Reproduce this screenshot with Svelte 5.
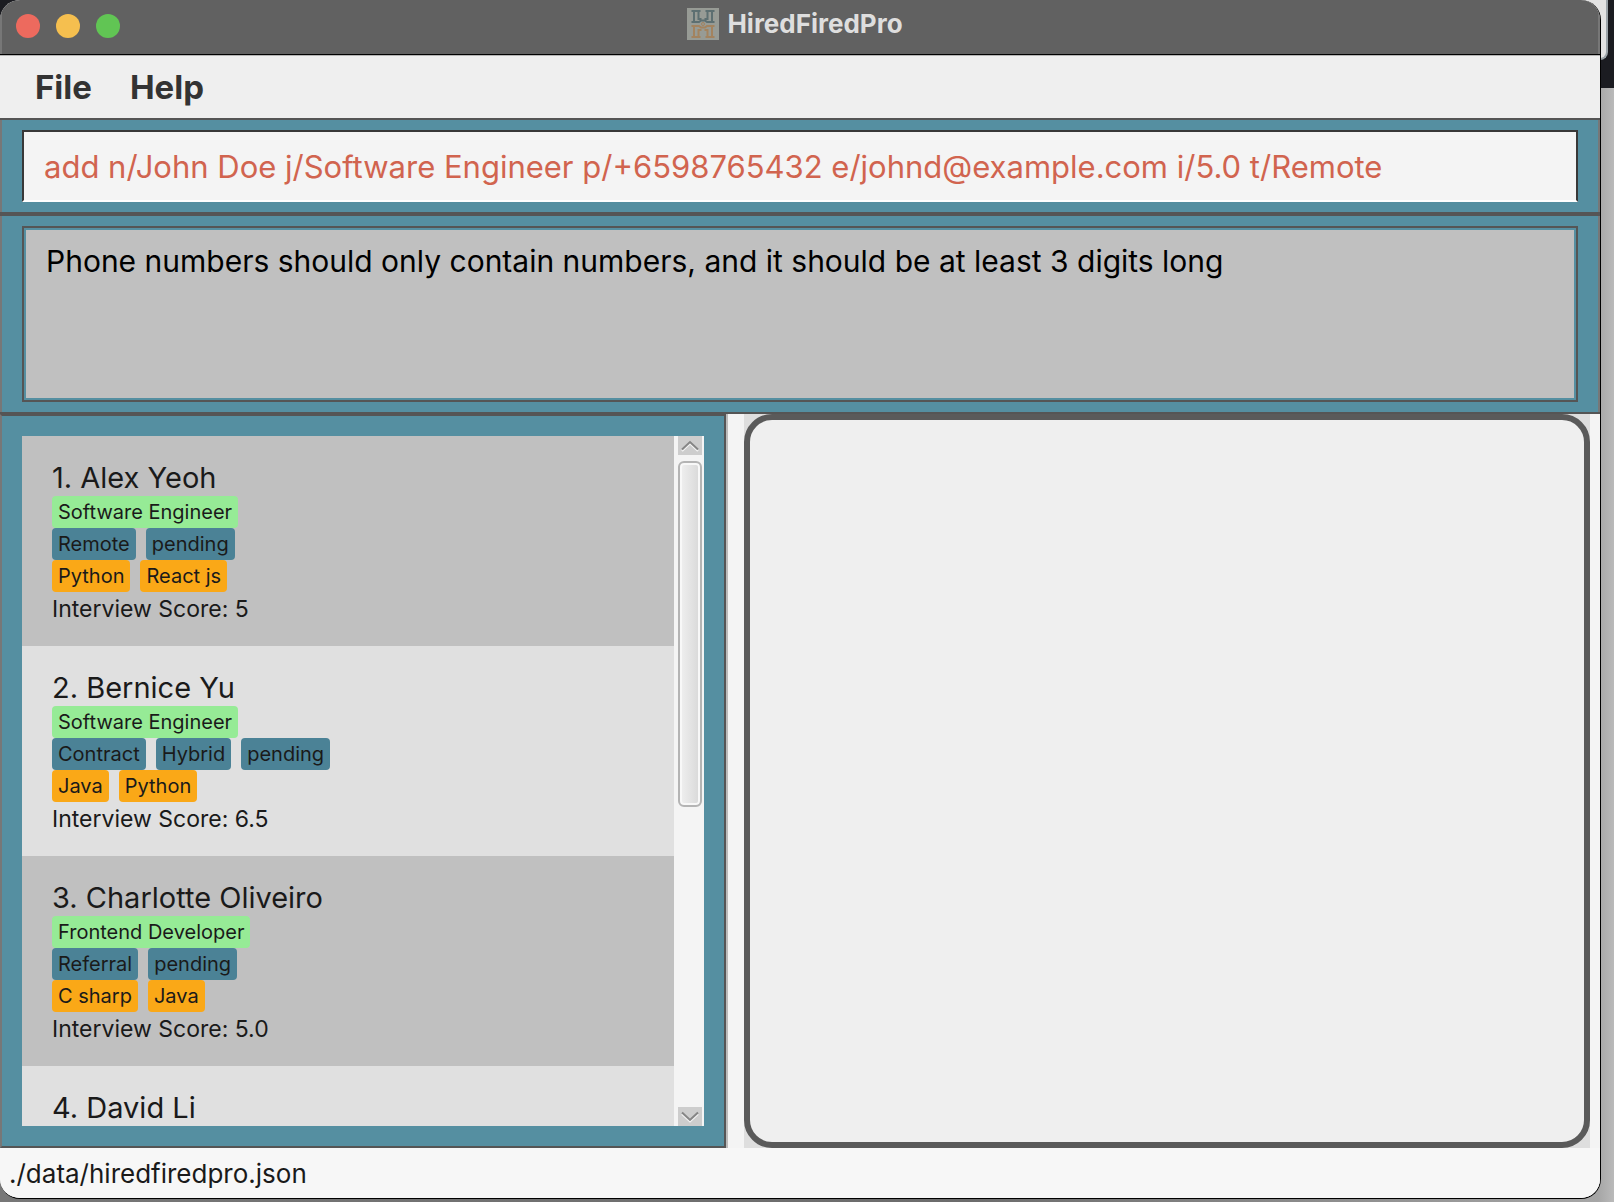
<script>
  const people = [
    { name: 'Alex Yeoh', role: 'Software Engineer', tags: ['Remote', 'pending'], skills: ['Python', 'React js'], score: '5' },
    { name: 'Bernice Yu', role: 'Software Engineer', tags: ['Contract', 'Hybrid', 'pending'], skills: ['Java', 'Python'], score: '6.5' },
    { name: 'Charlotte Oliveiro', role: 'Frontend Developer', tags: ['Referral', 'pending'], skills: ['C sharp', 'Java'], score: '5.0' },
    { name: 'David Li', role: '', tags: [], skills: [], score: '' }
  ];
  let command = $state('add n/John Doe j/Software Engineer p/+6598765432 e/johnd@example.com i/5.0 t/Remote');
  const result = 'Phone numbers should only contain numbers, and it should be at least 3 digits long';
</script>

<div class="desktop">
  <div class="behind"></div>
  <div class="window">
    <header class="titlebar">
      <div class="lights">
        <button class="light close" aria-label="Close"></button>
        <button class="light minimise" aria-label="Minimise"></button>
        <button class="light zoom" aria-label="Zoom"></button>
      </div>
      <div class="title">
        <svg width="32" height="32" viewBox="0 0 32 32" aria-hidden="true">
          <rect width="32" height="32" fill="#979b95" />
          <g fill="none" stroke="#5d6f71" stroke-width="2">
            <path d="M4.500 3h9M18.500 3h9M7 3v10M11.500 3v8h3M20.500 3v8h-3M25 3v10" />
            <path d="M4.500 14h7.500l2-1.500h4l2 1.500h7.500" />
          </g>
          <g fill="none" stroke="#a3835f" stroke-width="2">
            <path d="M4.500 18h7.500l2 1.500h4l2-1.500h7.500M7 18v11M11.500 29v-7h3M20.500 29v-7h-3M25 18v11M4.500 29h9M18.500 29h9" />
            <circle cx="16" cy="16" r="1.500" stroke-width="1" />
          </g>
        </svg>
        <span>HiredFiredPro</span>
      </div>
    </header>

    <nav class="menubar">
      <button>File</button>
      <button>Help</button>
    </nav>

    <section class="command">
      <input type="text" aria-label="Command" bind:value={command} spellcheck="false" />
    </section>

    <section class="result">
      <textarea aria-label="Result" readonly value={result}></textarea>
    </section>

    <main>
      <section class="left">
        <ol>
          {#each people as p, i}
            <li>
              <h2>{i + 1}. {p.name}</h2>
              {#if p.role}
                <div class="chips"><span class="chip role">{p.role}</span></div>
                <div class="chips">{#each p.tags as t}<span class="chip tag">{t}</span>{/each}</div>
                <div class="chips">{#each p.skills as s}<span class="chip skill">{s}</span>{/each}</div>
                <p>Interview Score: {p.score}</p>
              {/if}
            </li>
          {/each}
        </ol>
        <div class="scroll">
          <button aria-label="Scroll up">
            <svg width="24" height="19" viewBox="0 0 24 19"><path d="M4 15l8-7.500 8 7.500" fill="none" stroke="#f4f4f4" stroke-width="2" /><path d="M4 13.500l8-7.500 8 7.500" fill="none" stroke="#858585" stroke-width="2" /></svg>
          </button>
          <div class="track"><div class="thumb"></div></div>
          <button aria-label="Scroll down">
            <svg width="24" height="19" viewBox="0 0 24 19"><path d="M4 7l8 7.500L20 7" fill="none" stroke="#f4f4f4" stroke-width="2" /><path d="M4 5.500l8 7.500 8-7.500" fill="none" stroke="#858585" stroke-width="2" /></svg>
          </button>
        </div>
      </section>
      <section class="right"><div class="backing"><div class="detail"></div></div></section>
    </main>

    <footer>./data/hiredfiredpro.json</footer>
  </div>
</div>

<style>
  :global(body) { margin: 0; }
  .desktop, .desktop * { box-sizing: border-box; }
  .desktop {
    position: relative;
    height: 100vh;
    padding: 0 13px 3px 0;
    overflow: hidden;
    background: linear-gradient(#1b1c21 88px, transparent 88px), linear-gradient(90deg, #777, #6c6c6c 60%, #a6a6a6 99%, #bababa);
    font-family: Inter, "Liberation Sans", sans-serif;
    color: #1a1a1a;
  }
  .behind {
    position: absolute;
    top: 0;
    right: 6px;
    width: 40px;
    height: 60px;
    border-right: 2px solid #9ba3a8;
    border-bottom: 2px solid #9ba3a8;
    border-radius: 0 0 8px 0;
    background: #e2e2e2;
  }
  .window {
    position: relative;
    display: flex;
    flex-direction: column;
    height: 100%;
    overflow: hidden;
    border: solid #000;
    border-width: 0 1px 1px 0;
    border-radius: 20px;
    background: #f7f7f7;
  }
  button { border: 0; padding: 0; margin: 0; font: inherit; color: inherit; }
  .titlebar {
    position: relative;
    display: flex;
    align-items: center;
    justify-content: center;
    flex: none;
    height: 55px;
    padding-bottom: 6px;
    border-bottom: 1px solid #000;
    box-shadow: inset 2px 0 #777, inset -2px 0 #777;
    background: #616161;
  }
  .lights { position: absolute; left: 16px; top: 14px; display: flex; gap: 16px; }
  .light { width: 24px; height: 24px; border-radius: 50%; }
  .close { background: #ed6a5e; }
  .minimise { background: #f5bf4f; }
  .zoom { background: #61c554; }
  .title { display: flex; align-items: center; gap: 8px; padding-right: 10px; color: #dedede; font-size: 26px; font-weight: 700; line-height: 34px; }
  .title svg { display: block; }
  .menubar {
    display: flex;
    flex: none;
    gap: 38px;
    height: 63px;
    padding: 0 35px;
    border-top: 1px solid #b5b5b5;
    background: #efefef;
  }
  .menubar button { background: none; color: #333; font-size: 33px; font-weight: 700; line-height: 60px; }
  .command, .result, .left { border: 2px solid #555; background: #558fa1; }
  .command, .result { flex: none; box-shadow: inset 2px 0 #777, inset -2px 0 #777; }
  .command { padding: 10px 22px; border-width: 2px 0; }
  .command input {
    display: block;
    width: 100%;
    height: 72px;
    padding: 0 20px;
    border: solid #383838;
    border-width: 2px 2px 0;
    border-bottom: 2px solid #fff;
    border-radius: 0;
    outline: 0;
    background: #f4f4f4;
    color: #d1644f;
    font-family: inherit;
    font-size: 31px;
  }
  .result { padding: 10px 22px; border-width: 2px 0; }
  .result textarea {
    display: block;
    width: 100%;
    height: 176px;
    padding: 11px 22px;
    border: 2px solid #555;
    border-radius: 0;
    outline: 2px solid #558fa1;
    outline-offset: -4px;
    resize: none;
    background: #c0c0c0;
    color: #000;
    font-family: inherit;
    font-size: 30px;
    line-height: 44px;
  }
  main { display: flex; flex: 1 1 0; min-height: 0; background: #f4f4f4; }
  .left {
    display: flex;
    flex: 0 0 calc(45.5% - 2px);
    padding: 20px;
    border-left: 2px solid #777;
    box-shadow: 2px 0 #bbb;
  }
  ol { flex: 1; margin: 0; padding: 0; overflow: hidden; list-style: none; }
  li { height: 210px; padding: 24px 30px; background: #c0c0c0; }
  li:nth-child(even) { background: #e0e0e0; }
  h2 { margin: 0; font-size: 29px; font-weight: 400; line-height: 36px; }
  .chips { display: flex; gap: 10px; height: 32px; }
  .chip { padding: 0 6px; border-radius: 4px; font-size: 20px; line-height: 33px; }
  .role { background: #96eb96; }
  .tag { background: #4b8296; }
  .skill { background: #faa817; }
  p { margin: 0; font-size: 23px; line-height: 34px; }
  .scroll { display: flex; flex-direction: column; flex: none; width: 30px; padding: 0 2px 0 4px; background: #f4f4f4; }
  .scroll button { height: 19px; background: #cdcdcd; }
  .scroll svg { display: block; }
  .track { flex: 1; padding: 6px 0; }
  .thumb {
    height: 54%;
    border: 2px solid #b4b4b4;
    border-radius: 6px;
    box-shadow: inset 0 0 0 2px #f8f8f8;
    background: linear-gradient(90deg, #f0f0f0, #d8d8d8);
  }
  .right { display: flex; flex: 1; padding: 0 10px 0 18px; }
  .backing { display: flex; flex: 1; background: #dedede; }
  .detail {
    flex: 1;
    border: 6px solid #5a5a5a;
    border-radius: 28px;
    background: #efefef;
  }
  footer { flex: none; height: 50px; padding: 0 9px; font-size: 26px; line-height: 52px; background: #f7f7f7; }
</style>
